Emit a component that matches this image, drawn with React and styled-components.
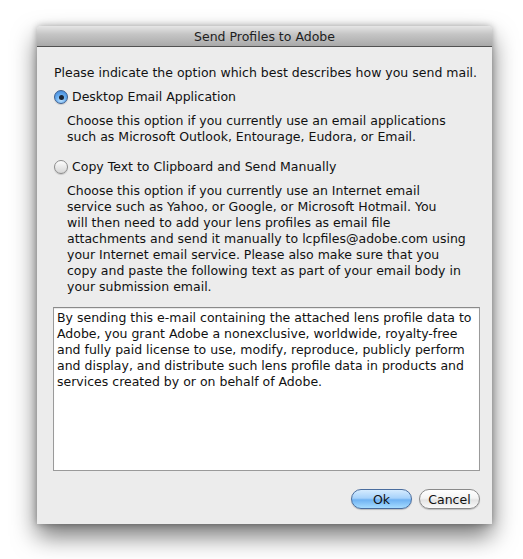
import React from "react";
import styled, { createGlobalStyle } from "styled-components";

const Global = createGlobalStyle`
  html, body { margin: 0; padding: 0; background: #ffffff; }
  body { font-family: "DejaVu Sans", "Liberation Sans", sans-serif; }
`;

const Page = styled.div`
  width: 523px;
  height: 559px;
  box-sizing: border-box;
  padding: 26px 31px 0 37px;
  display: flex;
  align-items: flex-start;
`;

const Window = styled.div`
  width: 455px;
  height: 498px;
  display: flex;
  flex-direction: column;
  background: #ececec;
  box-shadow: 0 12px 24px rgba(0, 0, 0, 0.55), 0 0 7px rgba(0, 0, 0, 0.3);
  border-radius: 4px 4px 0 0;
`;

const TitleBar = styled.div`
  height: 20px;
  flex: none;
  display: flex;
  align-items: center;
  justify-content: center;
  background: linear-gradient(#e6e6e6, #c6c6c6 40%, #a9a9a9);
  border-bottom: 1px solid #515151;
  border-radius: 4px 4px 0 0;
  font-size: 12.5px;
  color: #1e1e1e;
`;

const Body = styled.div`
  flex: 1;
  display: flex;
  flex-direction: column;
  padding: 18px 12px 15px 17px;
  font-size: 12.5px;
  line-height: 16px;
  color: #111;
`;

const Prompt = styled.div`
  margin-bottom: 7px;
`;

const Option = styled.label`
  display: flex;
  align-items: center;
  gap: 4px;
  height: 18px;
  margin-bottom: 7px;
`;

const Radio = styled.span`
  width: 14px;
  height: 14px;
  border-radius: 50%;
  box-sizing: border-box;
  display: flex;
  align-items: center;
  justify-content: center;
  flex: none;
  border: 1px solid ${(p) => (p.$checked ? "#3d5f8f" : "#8c8c8c")};
  background: ${(p) =>
    p.$checked
      ? "radial-gradient(circle at 50% 75%, #bfe3ff 0%, #6aaef0 45%, #3a7fd2 100%)"
      : "linear-gradient(#fdfdfd, #e9e9e9 50%, #d6d6d6 100%)"};
  box-shadow: 0 1px 1px rgba(0, 0, 0, 0.15);
`;

const Dot = styled.span`
  width: 5px;
  height: 5px;
  border-radius: 50%;
  background: #1a2433;
`;

const Desc = styled.div`
  padding-left: 13px;
  margin-bottom: 13px;
  white-space: nowrap;
`;

const TextBox = styled.div`
  margin-top: -1px;
  margin-left: -1px;
  height: 164px;
  box-sizing: border-box;
  background: #ffffff;
  border: 1px solid #9a9a9a;
  border-top-color: #8a8a8a;
  padding: 2px 3px;
  white-space: nowrap;
  overflow: hidden;
  box-shadow: inset 0 1px 1px rgba(0, 0, 0, 0.1);
`;

const Buttons = styled.div`
  display: flex;
  justify-content: flex-end;
  gap: 7px;
  margin-top: 18px;
`;

const Button = styled.button`
  font-family: inherit;
  font-size: 12.5px;
  width: 61px;
  height: 20px;
  border-radius: 10px;
  padding: 0;
  color: #111;
  cursor: default;
  border: 1px solid ${(p) => (p.$primary ? "#4a6d9e" : "#8a8a8a")};
  background: ${(p) =>
    p.$primary
      ? "linear-gradient(#d4ebff 0%, #a7d2fb 45%, #6fb2f2 55%, #a6dcff 100%)"
      : "linear-gradient(#ffffff 0%, #f4f4f4 45%, #e3e3e3 55%, #fafafa 100%)"};
  box-shadow: 0 1px 1px rgba(0, 0, 0, 0.2);
`;

export default function App() {
  return (
    <>
      <Global />
      <Page>
        <Window>
          <TitleBar>Send Profiles to Adobe</TitleBar>
          <Body>
            <Prompt>Please indicate the option which best describes how you send mail.</Prompt>
            <Option>
              <Radio $checked>
                <Dot />
              </Radio>
              Desktop Email Application
            </Option>
            <Desc>
              Choose this option if you currently use an email applications
              <br />
              such as Microsoft Outlook, Entourage, Eudora, or Email.
            </Desc>
            <Option>
              <Radio />
              Copy Text to Clipboard and Send Manually
            </Option>
            <Desc>
              Choose this option if you currently use an Internet email
              <br />
              service such as Yahoo, or Google, or Microsoft Hotmail. You
              <br />
              will then need to add your lens profiles as email file
              <br />
              attachments and send it manually to lcpfiles@adobe.com using
              <br />
              your Internet email service. Please also make sure that you
              <br />
              copy and paste the following text as part of your email body in
              <br />
              your submission email.
            </Desc>
            <TextBox>
              By sending this e-mail containing the attached lens profile data to
              <br />
              Adobe, you grant Adobe a nonexclusive, worldwide, royalty-free
              <br />
              and fully paid license to use, modify, reproduce, publicly perform
              <br />
              and display, and distribute such lens profile data in products and
              <br />
              services created by or on behalf of Adobe.
            </TextBox>
            <Buttons>
              <Button $primary>Ok</Button>
              <Button>Cancel</Button>
            </Buttons>
          </Body>
        </Window>
      </Page>
    </>
  );
}
